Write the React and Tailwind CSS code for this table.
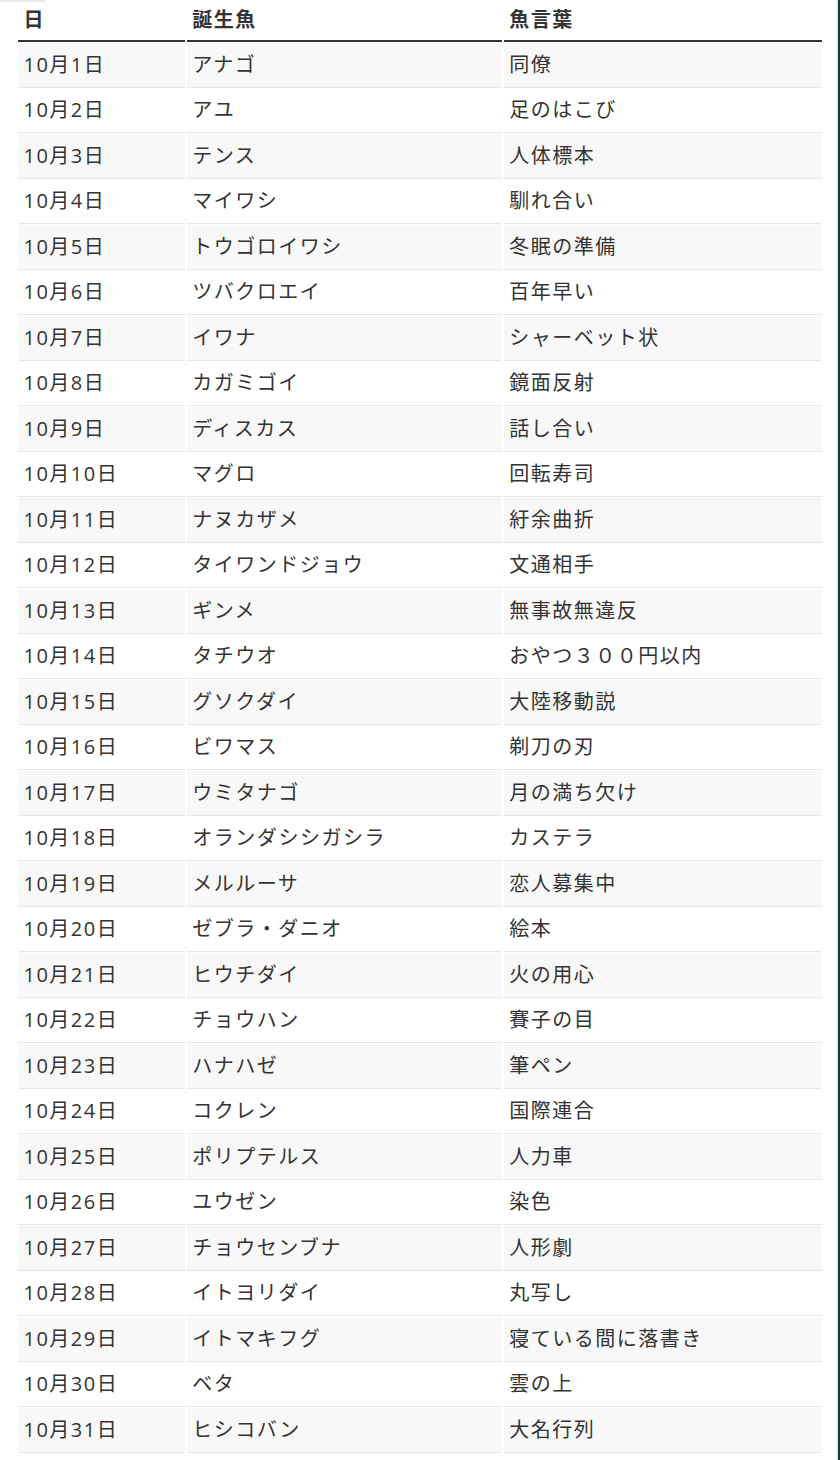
const rows = [
  ['10月1日', 'アナゴ', '同僚'],
  ['10月2日', 'アユ', '足のはこび'],
  ['10月3日', 'テンス', '人体標本'],
  ['10月4日', 'マイワシ', '馴れ合い'],
  ['10月5日', 'トウゴロイワシ', '冬眠の準備'],
  ['10月6日', 'ツバクロエイ', '百年早い'],
  ['10月7日', 'イワナ', 'シャーベット状'],
  ['10月8日', 'カガミゴイ', '鏡面反射'],
  ['10月9日', 'ディスカス', '話し合い'],
  ['10月10日', 'マグロ', '回転寿司'],
  ['10月11日', 'ナヌカザメ', '紆余曲折'],
  ['10月12日', 'タイワンドジョウ', '文通相手'],
  ['10月13日', 'ギンメ', '無事故無違反'],
  ['10月14日', 'タチウオ', 'おやつ３００円以内'],
  ['10月15日', 'グソクダイ', '大陸移動説'],
  ['10月16日', 'ビワマス', '剃刀の刃'],
  ['10月17日', 'ウミタナゴ', '月の満ち欠け'],
  ['10月18日', 'オランダシシガシラ', 'カステラ'],
  ['10月19日', 'メルルーサ', '恋人募集中'],
  ['10月20日', 'ゼブラ・ダニオ', '絵本'],
  ['10月21日', 'ヒウチダイ', '火の用心'],
  ['10月22日', 'チョウハン', '賽子の目'],
  ['10月23日', 'ハナハゼ', '筆ペン'],
  ['10月24日', 'コクレン', '国際連合'],
  ['10月25日', 'ポリプテルス', '人力車'],
  ['10月26日', 'ユウゼン', '染色'],
  ['10月27日', 'チョウセンブナ', '人形劇'],
  ['10月28日', 'イトヨリダイ', '丸写し'],
  ['10月29日', 'イトマキフグ', '寝ている間に落書き'],
  ['10月30日', 'ベタ', '雲の上'],
  ['10月31日', 'ヒシコバン', '大名行列'],
]

export default function App() {
  return (
    <div className="flex h-[1460px] w-[840px] bg-white text-[#333] font-['Open_Sans','Noto_Sans_CJK_JP',sans-serif]">
      <div className="flex-1 relative">
        <div className="absolute left-0 top-0 h-[2px] w-[45px] bg-[#e8e8e8]" />
        <div className="pl-[15.5px] pr-[13.5px]">
          <table className="w-full border-separate border-spacing-x-[2.5px] border-spacing-y-[1px] table-fixed text-[20px] tracking-[1.5px]">
            <colgroup>
              <col className="w-[167.7px]" />
              <col className="w-[315px]" />
              <col />
            </colgroup>
            <thead>
              <tr>
                <th className="h-[41px] border-b-2 border-[#333] text-left font-bold pl-[6px] pb-[2px] align-middle">日</th>
                <th className="h-[41px] border-b-2 border-[#333] text-left font-bold pl-[5px] pb-[2px] align-middle">誕生魚</th>
                <th className="h-[41px] border-b-2 border-[#333] text-left font-bold pl-[5px] pb-[2px] align-middle">魚言葉</th>
              </tr>
            </thead>
            <tbody>
              {rows.map((r, i) => (
                <tr key={i} className={i % 2 === 0 ? 'bg-[#f9f8f8]' : 'bg-white'}>
                  <td className="h-[44.5px] border-b border-[#e6e6e6] pl-[6px] align-middle">{r[0]}</td>
                  <td className="h-[44.5px] border-b border-[#e6e6e6] pl-[5px] align-middle">{r[1]}</td>
                  <td className="h-[44.5px] border-b border-[#e6e6e6] pl-[5px] align-middle">{r[2]}</td>
                </tr>
              ))}
            </tbody>
          </table>
        </div>
      </div>
      <div className="w-px bg-[#dfe3e3]" />
      <div className="w-[2px] bg-[#0e3c40]" />
    </div>
  )
}
